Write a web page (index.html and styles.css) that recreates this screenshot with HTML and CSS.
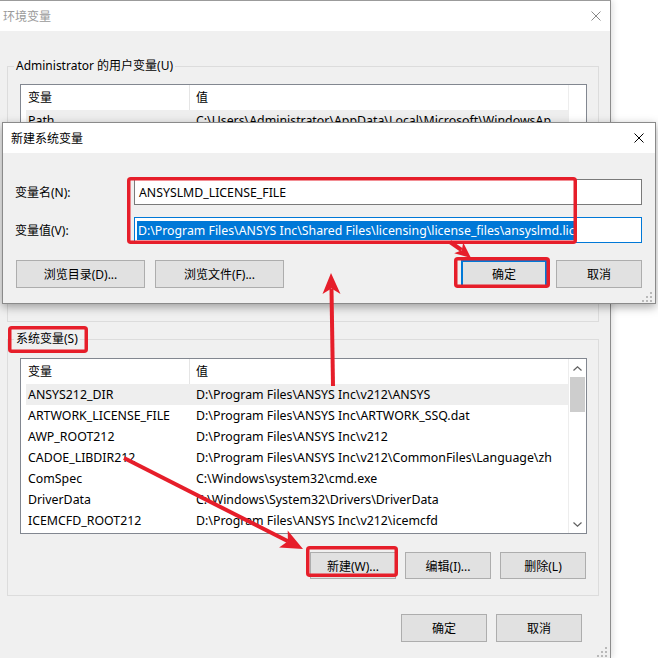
FILE: index.html
```html
<!DOCTYPE html>
<html lang="zh-CN">
<head>
<meta charset="utf-8">
<title>环境变量</title>
<link rel="stylesheet" href="styles.css">
</head>
<body>
<div class="stage">
  <div class="win main-win">
    <div class="titlebar">
      <span class="title title-inactive">环境变量</span>
      <svg class="close close-inactive" viewBox="0 0 10 10"><path d="M0.5 0.5 L9.5 9.5 M9.5 0.5 L0.5 9.5"/></svg>
    </div>
    <div class="win-body">
      <section class="group group-user">
        <div class="group-label">Administrator 的用户变量(U)</div>
        <div class="list">
          <div class="list-main">
            <div class="list-head"><div class="cell c1">变量</div><div class="cell c2">值</div></div>
            <div class="row sel"><div class="cell c1">Path</div><div class="cell c2">C:\Users\Administrator\AppData\Local\Microsoft\WindowsApps;C:\Users\Administrator\AppData\Roaming</div></div>
          </div>
          <div class="vscroll">
            <div class="sb-track"></div>
          </div>
        </div>
      </section>

      <section class="group group-sys">
        <div class="group-label">系统变量(S)</div>
        <div class="list">
          <div class="list-main">
            <div class="list-head"><div class="cell c1">变量</div><div class="cell c2">值</div></div>
            <div class="row sel"><div class="cell c1">ANSYS212_DIR</div><div class="cell c2">D:\Program Files\ANSYS Inc\v212\ANSYS</div></div>
            <div class="row"><div class="cell c1">ARTWORK_LICENSE_FILE</div><div class="cell c2">D:\Program Files\ANSYS Inc\ARTWORK_SSQ.dat</div></div>
            <div class="row"><div class="cell c1">AWP_ROOT212</div><div class="cell c2">D:\Program Files\ANSYS Inc\v212</div></div>
            <div class="row"><div class="cell c1">CADOE_LIBDIR212</div><div class="cell c2">D:\Program Files\ANSYS Inc\v212\CommonFiles\Language\zh</div></div>
            <div class="row"><div class="cell c1">ComSpec</div><div class="cell c2">C:\Windows\system32\cmd.exe</div></div>
            <div class="row"><div class="cell c1">DriverData</div><div class="cell c2">C:\Windows\System32\Drivers\DriverData</div></div>
            <div class="row"><div class="cell c1">ICEMCFD_ROOT212</div><div class="cell c2">D:\Program Files\ANSYS Inc\v212\icemcfd</div></div>
          </div>
          <div class="vscroll">
            <div class="sb-btn"><svg viewBox="0 0 9 5"><polyline points="0.5,4.5 4.5,0.8 8.5,4.5"/></svg></div>
            <div class="sb-thumb"></div>
            <div class="sb-track"></div>
            <div class="sb-btn"><svg viewBox="0 0 9 5"><polyline points="0.5,0.5 4.5,4.2 8.5,0.5"/></svg></div>
          </div>
        </div>
        <div class="btn-row">
          <div class="btn">新建(W)...</div>
          <div class="btn">编辑(I)...</div>
          <div class="btn">删除(L)</div>
        </div>
      </section>

      <div class="btn-row footer">
        <div class="btn">确定</div>
        <div class="btn">取消</div>
      </div>
    </div>
    <svg class="grip main-grip" viewBox="0 0 10 10"><rect x="8" y="0" width="2" height="2"/><rect x="4" y="4" width="2" height="2"/><rect x="8" y="4" width="2" height="2"/><rect x="0" y="8" width="2" height="2"/><rect x="4" y="8" width="2" height="2"/><rect x="8" y="8" width="2" height="2"/></svg>
  </div>

  <div class="dialog">
    <div class="titlebar">
      <span class="title">新建系统变量</span>
      <svg class="close" viewBox="0 0 10 10"><path d="M0.5 0.5 L9.5 9.5 M9.5 0.5 L0.5 9.5"/></svg>
    </div>
    <div class="dlg-body">
      <div class="field">
        <label>变量名(N):</label>
        <div class="input">ANSYSLMD_LICENSE_FILE</div>
      </div>
      <div class="field">
        <label>变量值(V):</label>
        <div class="input focus"><span class="selection">D:\Program Files\ANSYS Inc\Shared Files\licensing\license_files\ansyslmd.lic</span></div>
      </div>
      <div class="dlg-btns">
        <div class="btn btn-wide">浏览目录(D)...</div>
        <div class="btn btn-wide">浏览文件(F)...</div>
        <div class="spacer"></div>
        <div class="btn btn-default">确定</div>
        <div class="btn">取消</div>
      </div>
    </div>
    <svg class="grip dlg-grip" viewBox="0 0 10 10"><rect x="8" y="0" width="2" height="2"/><rect x="4" y="4" width="2" height="2"/><rect x="8" y="4" width="2" height="2"/><rect x="0" y="8" width="2" height="2"/><rect x="4" y="8" width="2" height="2"/><rect x="8" y="8" width="2" height="2"/></svg>
  </div>

  <svg class="annot" viewBox="0 0 658 658" width="658" height="658">
    <g class="boxes">
      <rect x="128.75" y="178.75" width="446.5" height="63.5" rx="2"/>
      <rect x="455.75" y="258.75" width="92.5" height="27.5" rx="2"/>
      <rect x="9.75" y="327.75" width="76.5" height="23.5" rx="2"/>
      <rect x="307.75" y="547.75" width="88.5" height="27.5" rx="2"/>
    </g>
    <g class="arrows">
      <line x1="333" y1="386" x2="331.5" y2="289"/>
      <polygon points="331,273 340.5,294 331.5,288.5 322.5,294"/>
      <line x1="450" y1="242" x2="461.5" y2="250"/>
      <polygon points="471,258 454.2,253.2 461.8,250.3 463.2,242.4"/>
      <line x1="124" y1="458" x2="288" y2="541.3"/>
      <polygon points="303,549 279.1,547.5 287.9,541.3 287.7,530.5"/>
    </g>
  </svg>
</div>
</body>
</html>
```

FILE: styles.css
```css
* { box-sizing: border-box; }
html, body { margin: 0; padding: 0; }
body {
  background: #fff;
  font-family: "Noto Sans", "Noto Sans CJK SC", sans-serif;
  font-size: 12px;
  color: #000;
}
.stage {
  position: relative;
  width: 658px;
  height: 658px;
  overflow: hidden;
  background: #fff;
}

/* main window */
.main-win {
  position: relative;
  width: 611px;
  height: 658px;
  border-top: 1px solid #9b9b9b;
  border-right: 1px solid #8c8c8c;
  background: #f0f0f0;
  box-shadow: 2px 0 6px rgba(0, 0, 0, 0.12);
}
.titlebar {
  height: 30px;
  background: #fff;
  display: flex;
  align-items: center;
  justify-content: space-between;
}
.main-win .titlebar { padding: 0 9px 0 3px; }
.title-inactive { color: #9a9a9a; }
.close { width: 10px; height: 10px; display: block; }
.close path { stroke: #000; stroke-width: 1; fill: none; }
.close-inactive path { stroke: #8a8a8a; }

.win-body { padding: 35px 11px 0 7px; }

/* group boxes */
.group {
  border: 1px solid #dcdcdc;
  padding: 0 11px 0 12px;
}
.group-label {
  width: fit-content;
  margin: -9px 0 0 -6px;
  padding: 0 2px;
  height: 16px;
  line-height: 16px;
  background: #f0f0f0;
  white-space: nowrap;
}
.group-user { padding-bottom: 61px; }
.group-user .list { margin-top: 10px; }
.group-sys { margin-top: 17px; padding-bottom: 16px; }
.group-sys .list { margin-top: 11px; }

/* list view */
.list {
  height: 176px;
  border: 1px solid #828790;
  background: #fff;
  display: flex;
}
.list-main { flex: 1; min-width: 0; overflow: hidden; }
.list-head { display: flex; height: 25px; }
.cell {
  white-space: nowrap;
  overflow: hidden;
  text-overflow: ellipsis;
}
.list-head .cell { line-height: 25px; }
.list-head .c1 { flex: none; width: 169px; padding-left: 7px; border-right: 1px solid #e5e5e5; }
.list-head .c2 { flex: 1; min-width: 0; padding-left: 6px; }
.row { display: flex; height: 21px; margin-left: 5px; }
.row .cell { line-height: 21px; font-size: 12.35px; }
.row .c1 { flex: none; width: 164px; padding-left: 2px; }
.row .c2 { flex: 1; min-width: 0; padding: 0 6px; }
.row.sel { background: #eeeeee; }

.vscroll {
  flex: none;
  width: 18px;
  background: #fff;
  border-left: 1px solid #ededed;
  display: flex;
  flex-direction: column;
}
.sb-btn {
  height: 18px;
  display: flex;
  align-items: center;
  justify-content: center;
}
.sb-btn svg { width: 9px; height: 5px; display: block; }
.sb-btn polyline { fill: none; stroke: #606060; stroke-width: 1.2; }
.sb-thumb { height: 35px; margin: 0 1px; background: #cdcdcd; }
.sb-track { flex: 1; }

/* buttons */
.btn-row {
  display: flex;
  justify-content: flex-end;
  gap: 9px;
  margin-top: 18px;
  margin-right: 1px;
}
.btn {
  width: 86px;
  height: 27px;
  background: #e1e1e1;
  border: 1px solid #adadad;
  display: flex;
  align-items: center;
  justify-content: center;
  white-space: nowrap;
}
.footer { margin-top: 18px; margin-right: 17px; }
.footer .btn { height: 28px; }

.grip { position: absolute; width: 10px; height: 10px; }
.grip rect { fill: #b9b9b9; }
.main-grip { right: 3px; bottom: 1px; }
.dlg-grip { right: 3px; bottom: 1px; }

/* dialog */
.dialog {
  position: absolute;
  left: 2px;
  top: 122px;
  width: 654px;
  height: 182px;
  border: 1px solid #8a8a8a;
  background: #f0f0f0;
  box-shadow: 0 3px 9px rgba(0, 0, 0, 0.35);
  z-index: 5;
}
.dialog .titlebar { padding: 0 11px 0 8px; }
.dlg-body { padding: 26px 13px 0 12px; }
.field { display: flex; align-items: center; height: 26px; }
.field + .field { margin-top: 12px; }
.field label { flex: none; width: 119px; }
.input {
  flex: 1;
  min-width: 0;
  height: 26px;
  border: 1px solid #7a7a7a;
  background: #fff;
  padding-left: 4px;
  display: flex;
  align-items: center;
  white-space: nowrap;
  overflow: hidden;
  font-size: 12.3px;
}
.input.focus { border-color: #0078d7; padding-left: 2px; }
.selection {
  background: #0078d7;
  color: #fff;
  padding: 0 1px;
  line-height: 19px;
}
.dlg-btns { display: flex; margin-top: 17px; padding-left: 1px; }
.dlg-btns .btn { height: 28px; }
.dlg-btns .btn-wide { width: 129px; }
.dlg-btns .btn-wide + .btn-wide { margin-left: 10px; }
.dlg-btns .spacer { flex: 1; }
.dlg-btns .btn-default { margin-right: 9px; border-color: #0078d7; box-shadow: inset 0 0 0 1px #0078d7; }

/* annotations */
.annot {
  position: absolute;
  left: 0;
  top: 0;
  z-index: 10;
  pointer-events: none;
}
.annot .boxes rect { fill: none; stroke: #e61e2a; stroke-width: 3.5; }
.annot .arrows line { stroke: #e61e2a; stroke-width: 4; }
.annot .arrows polygon { fill: #e61e2a; }
```
